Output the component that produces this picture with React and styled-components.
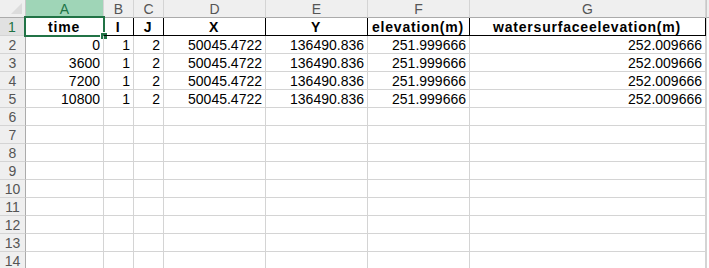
import React from 'react';
import styled, { createGlobalStyle, css } from 'styled-components';

const GlobalStyle = createGlobalStyle`
    html, body {
        margin: 0;
        padding: 0;
        background: #fff;
        overflow: hidden;
    }
    body {
        font-family: 'Liberation Sans', Arial, sans-serif;
    }
`;

const columns = ['A', 'B', 'C', 'D', 'E', 'F', 'G'];
const header = ['time', 'I', 'J', 'X', 'Y', 'elevation(m)', 'watersurfaceelevation(m)'];
const data = [
    ['0', '1', '2', '50045.4722', '136490.836', '251.999666', '252.009666'],
    ['3600', '1', '2', '50045.4722', '136490.836', '251.999666', '252.009666'],
    ['7200', '1', '2', '50045.4722', '136490.836', '251.999666', '252.009666'],
    ['10800', '1', '2', '50045.4722', '136490.836', '251.999666', '252.009666'],
];
const ROWS = 14;

const App = () => {
    const rows = [];
    for (let r = 1; r <= ROWS; r++) {
        const values = r === 1 ? header : data[r - 2] || [];
        rows.push(
            <React.Fragment key={r}>
                <RowHead $active={r === 1}>{r}</RowHead>
                {columns.map((c, i) => (
                    <Cell key={c} $head={r === 1}>
                        {values[i] ?? ''}
                        {r === 1 && i === 0 && (
                            <Selection>
                                <Handle />
                            </Selection>
                        )}
                    </Cell>
                ))}
                <Rest />
            </React.Fragment>
        );
    }

    return (
        <>
            <GlobalStyle />
            <Sheet>
                <Corner>
                    <CornerTri />
                </Corner>
                {columns.map((c, i) => (
                    <ColHead key={c} $active={i === 0}>
                        {c}
                    </ColHead>
                ))}
                <ColRest />
                {rows}
            </Sheet>
        </>
    );
};

export default App;

const Sheet = styled.div`
    display: grid;
    grid-template-columns: 26px 78px 30px 30px 102px 102px 102px 236px 1fr;
    grid-auto-rows: 18px;
    width: 709px;
    height: 268px;
    overflow: hidden;
    font-size: 14px;
    color: #000;
`;

const Corner = styled.div`
    display: flex;
    align-items: flex-end;
    justify-content: flex-end;
    padding: 3px;
    background: #efefef;
    border-right: 1px solid #c8c8c8;
    border-bottom: 1px solid #ababab;
    box-sizing: border-box;
`;

const CornerTri = styled.div`
    width: 0;
    height: 0;
    border-left: 11px solid transparent;
    border-bottom: 11px solid #dcdcdc;
`;

const ColHead = styled.div`
    display: flex;
    align-items: center;
    justify-content: center;
    box-sizing: border-box;
    background: #efefef;
    color: #555;
    border-right: 1px solid #d4d4d4;
    border-bottom: 1px solid #ababab;
    font-size: 14px;
    ${(p) =>
        p.$active &&
        css`
            background: #9fd5b7;
            color: #217346;
            border-bottom: 1px solid #217346;
        `}
`;

const ColRest = styled.div`
    background: #efefef;
    border-bottom: 1px solid #ababab;
    border-left: 1px solid #c8c8c8;
    box-sizing: border-box;
`;

const RowHead = styled.div`
    display: flex;
    align-items: center;
    justify-content: center;
    box-sizing: border-box;
    background: #efefef;
    color: #555;
    border-right: 1px solid #ababab;
    border-bottom: 1px solid #d4d4d4;
    font-size: 14px;
    ${(p) =>
        p.$active &&
        css`
            background: #e1e1e1;
            color: #217346;
            border-right: 2px solid #217346;
        `}
`;

const Cell = styled.div`
    position: relative;
    display: flex;
    align-items: center;
    justify-content: flex-end;
    box-sizing: border-box;
    padding: 1px 3px 0 2px;
    border-right: 1px solid #d4d4d4;
    border-bottom: 1px solid #d4d4d4;
    white-space: nowrap;
    ${(p) =>
        p.$head &&
        css`
            justify-content: center;
            font-weight: 700;
            letter-spacing: 0.8px;
            border-right: 1px solid #000;
            border-bottom: 1px solid #000;
        `}
`;

const Selection = styled.div`
    position: absolute;
    inset: -2px;
    border: 2px solid #217346;
    pointer-events: none;
`;

const Handle = styled.div`
    position: absolute;
    right: -5px;
    bottom: -5px;
    width: 6px;
    height: 6px;
    background: #217346;
    border: 1px solid #fff;
`;

const Rest = styled.div`
    border-left: 1px solid #d4d4d4;
    box-sizing: border-box;
`;
